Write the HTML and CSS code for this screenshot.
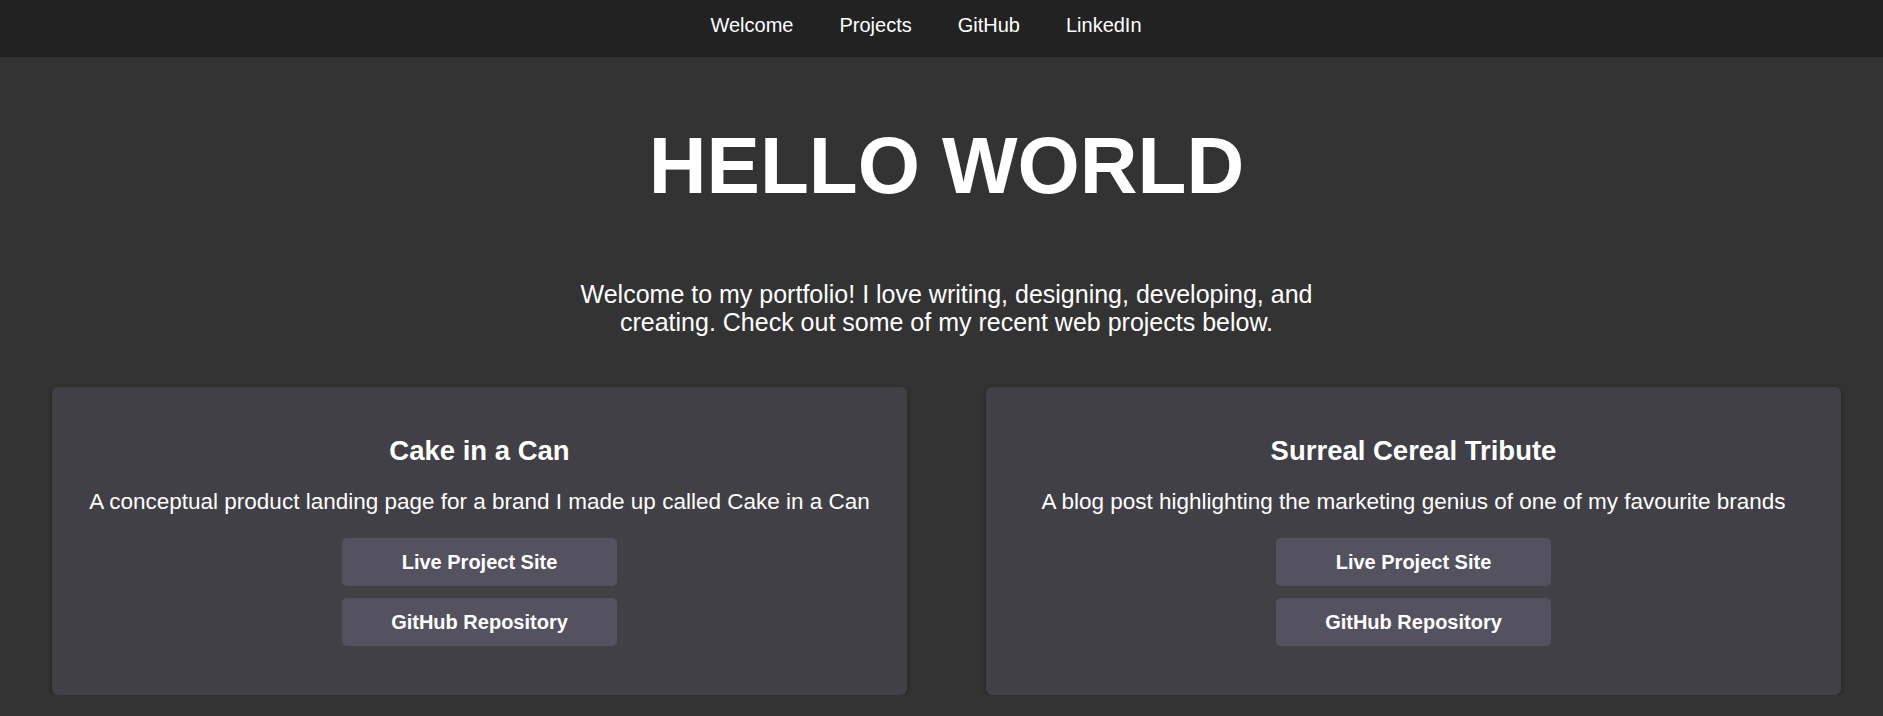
FILE: index.html
```html
<!DOCTYPE html>
<html lang="en">
<head>
<meta charset="utf-8">
<title>Portfolio</title>
<link rel="stylesheet" href="styles.css">
</head>
<body>
<nav class="navbar">
  <ul class="nav-list">
    <li><a href="#welcome">Welcome</a></li>
    <li><a href="#projects">Projects</a></li>
    <li><a href="#github">GitHub</a></li>
    <li><a href="#linkedin">LinkedIn</a></li>
  </ul>
</nav>
<main class="main">
  <section class="welcome" id="welcome">
    <h1 class="title">HELLO WORLD</h1>
    <p class="intro">Welcome to my portfolio! I love writing, designing, developing, and creating. Check out some of my recent web projects below.</p>
  </section>
  <section class="projects" id="projects">
    <article class="card">
      <h2 class="card-title">Cake in a Can</h2>
      <p class="card-text">A conceptual product landing page for a brand I made up called Cake in a Can</p>
      <div class="card-buttons">
        <a class="btn" href="#">Live Project Site</a>
        <a class="btn" href="#">GitHub Repository</a>
      </div>
    </article>
    <article class="card">
      <h2 class="card-title">Surreal Cereal Tribute</h2>
      <p class="card-text">A blog post highlighting the marketing genius of one of my favourite brands</p>
      <div class="card-buttons">
        <a class="btn" href="#">Live Project Site</a>
        <a class="btn" href="#">GitHub Repository</a>
      </div>
    </article>
  </section>
</main>
</body>
</html>
```
FILE: styles.css
```css
* { box-sizing: border-box; }

html, body {
  margin: 0;
  padding: 0;
  background: #333333;
  color: #ffffff;
  font-family: "Liberation Sans", Arial, sans-serif;
}

.navbar {
  background: #222222;
  padding: 14px 0 20px;
}

.nav-list {
  list-style: none;
  margin: 0;
  padding: 0 31px 0 0;
  display: flex;
  justify-content: center;
  gap: 46px;
}

.nav-list a {
  color: #ffffff;
  text-decoration: none;
  font-size: 20px;
  line-height: normal;
}

.main {
  padding-left: 10px;
}

.welcome {
  text-align: center;
}

.title {
  font-size: 80px;
  font-weight: 700;
  line-height: normal;
  margin: 63px 0 68px;
}

.intro {
  font-size: 25px;
  line-height: 28px;
  max-width: 780px;
  margin: 0 auto;
}

.projects {
  display: grid;
  grid-template-columns: 1fr 1fr;
  gap: 79px;
  padding: 0 42px;
  margin-top: 51px;
}

.card {
  background: #414046;
  border-radius: 6px;
  box-shadow: 0 2px 5px rgba(0, 0, 0, 0.35);
  text-align: center;
  padding: 48px 20px 49px;
  height: 308px;
}

.card-title {
  font-size: 27.5px;
  font-weight: 700;
  line-height: normal;
  margin: 0 0 22px;
}

.card-text {
  font-size: 22.5px;
  line-height: normal;
  margin: 0 0 23px;
}

.card-buttons {
  display: flex;
  flex-direction: column;
  align-items: center;
  gap: 12px;
}

.btn {
  display: flex;
  align-items: center;
  justify-content: center;
  width: 275px;
  height: 48px;
  background: #55525f;
  border-radius: 5px;
  color: #ffffff;
  text-decoration: none;
  font-size: 20px;
  font-weight: 700;
}
```
